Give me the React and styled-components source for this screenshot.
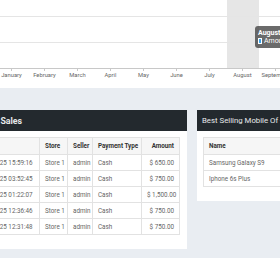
import React from 'react'
import styled, { createGlobalStyle } from 'styled-components'

const GlobalStyle = createGlobalStyle`
  body {
    margin: 0;
    font-family: Roboto, "Liberation Sans", sans-serif;
    background: #fff;
    overflow: hidden;
  }
`;

const Page = styled.div`
  width: 280px;
  height: 280px;
  overflow: hidden;
  display: flex;
  flex-direction: column;
`;

const ChartBox = styled.div`
  position: relative;
  height: 88px;
  background: #fff;
  flex-shrink: 0;
`;

const Tooltip = styled.div`
  position: absolute;
  left: 255px;
  top: 26px;
  width: 44px;
  height: 22px;
  border-radius: 3px;
  background: rgba(70, 70, 70, 0.8);
  color: #fff;
  font-size: 7px;
  padding: 3px 3px;
  box-sizing: border-box;
  line-height: 8px;
`;

const TipTitle = styled.div`
  font-weight: 700;
`;

const TipRow = styled.div`
  display: flex;
  align-items: center;
  gap: 2px;
  white-space: nowrap;
`;

const Swatch = styled.span`
  width: 4px;
  height: 4px;
  background: #36a2eb;
  border: 1px solid #fff;
`;

const Content = styled.div`
  background: #e9edf2;
  padding: 22px 0 9px 0;
  flex-shrink: 0;
`;

const Row = styled.div`
  display: flex;
  align-items: flex-start;
  gap: 10px;
  margin-left: -37px;
`;

const Panel = styled.div`
  background: #fff;
  width: ${p => p.$w}px;
  flex-shrink: 0;
`;

const PanelHead = styled.div`
  background: #23292e;
  color: #e6e8ea;
  height: 21px;
  display: flex;
  align-items: center;
  padding: 0 5px 0 ${p => (p.$bold ? '11px' : '5px')};
  font-size: ${p => (p.$bold ? '8.8px' : '7.8px')};
  font-weight: ${p => (p.$bold ? 700 : 400)};
  white-space: nowrap;
  overflow: hidden;
`;

const PanelBody = styled.div`
  padding: 6px 7px 14px 6px;
`;

const Table = styled.table`
  border-collapse: collapse;
  width: 100%;
  table-layout: fixed;
  font-size: 6.3px;
`;

const Th = styled.th`
  box-sizing: border-box;
  background: #f6f6f6;
  color: #333;
  font-weight: 700;
  height: 17px;
  padding: 0 5px;
  border: 1px solid #e2e2e2;
  text-align: ${p => (p.$right ? 'right' : 'left')};
  width: ${p => (p.$w ? p.$w + 'px' : 'auto')};
  white-space: nowrap;
`;

const Td = styled.td`
  color: #666;
  height: 15px;
  padding: 0 5px;
  border: 1px solid #e2e2e2;
  text-align: ${p => (p.$right ? 'right' : 'left')};
  white-space: nowrap;
  overflow: hidden;
`;

const months = ['January', 'February', 'March', 'April', 'May', 'June', 'July', 'August', 'September']

const sales = [
  ['2023-10-25 15:59:16', '$ 650.00'],
  ['2023-10-25 03:52:45', '$ 750.00'],
  ['2023-10-25 01:22:07', '$ 1,500.00'],
  ['2023-10-25 12:36:46', '$ 750.00'],
  ['2023-10-25 12:31:48', '$ 750.00'],
]

const mobiles = ['Samsung Galaxy S9', 'Iphone 6s Plus']

function Chart() {
  return (
    <svg width="280" height="88">
      <rect x="227" y="0" width="32" height="68" fill="#e6e6e6" />
      <line x1="0" y1="16.5" x2="280" y2="16.5" stroke="#e5e5e5" />
      <line x1="0" y1="42.5" x2="280" y2="42.5" stroke="#e5e5e5" />
      <line x1="0" y1="68.5" x2="280" y2="68.5" stroke="#c8c8c8" />
      {months.map((m, i) => {
        const x = 11.5 + i * 33
        return (
          <g key={m}>
            <line x1={x} y1="68" x2={x} y2="71" stroke="#c8c8c8" />
            <text x={x} y="77" fontSize="5.8" fill="#666" textAnchor="middle" fontFamily="Roboto, sans-serif">{m}</text>
          </g>
        )
      })}
    </svg>
  )
}

export default function App() {
  return (
    <Page>
      <GlobalStyle />
      <ChartBox>
        <Chart />
        <Tooltip>
          <TipTitle>August</TipTitle>
          <TipRow><Swatch />Amount: 0</TipRow>
        </Tooltip>
      </ChartBox>
      <Content>
        <Row>
          <Panel $w={224}>
            <PanelHead $bold>Last 5 Sales</PanelHead>
            <PanelBody>
              <Table>
                <thead>
                  <tr>
                    <Th>Date</Th>
                    <Th $w={28}>Store</Th>
                    <Th $w={25}>Seller</Th>
                    <Th $w={49}>Payment Type</Th>
                    <Th $w={38} $right>Amount</Th>
                  </tr>
                </thead>
                <tbody>
                  {sales.map(([d, a], i) => (
                    <tr key={i}>
                      <Td>{d}</Td>
                      <Td>Store 1</Td>
                      <Td>admin</Td>
                      <Td>Cash</Td>
                      <Td $right>{a}</Td>
                    </tr>
                  ))}
                </tbody>
              </Table>
            </PanelBody>
          </Panel>
          <Panel $w={200}>
            <PanelHead>Best Selling Mobile Of - October</PanelHead>
            <PanelBody>
              <Table>
                <thead>
                  <tr><Th>Name</Th></tr>
                </thead>
                <tbody>
                  {mobiles.map(m => (
                    <tr key={m}><Td>{m}</Td></tr>
                  ))}
                </tbody>
              </Table>
            </PanelBody>
          </Panel>
        </Row>
      </Content>
    </Page>
  )
}
